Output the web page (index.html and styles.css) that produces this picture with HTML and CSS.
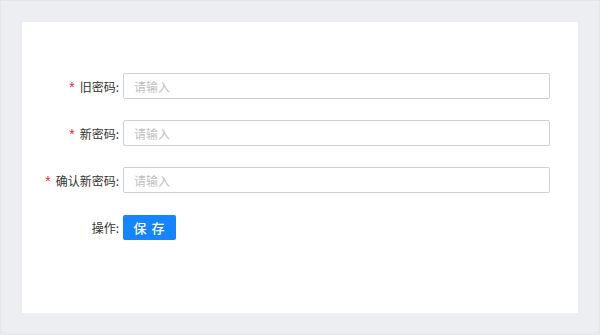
FILE: index.html
```html
<!doctype html>
<html>
  <head>
    <meta charset="utf-8" />
    <meta name="viewport" content="width=device-width, initial-scale=1" />
    <link rel="stylesheet" href="styles.css">
  </head>

  <body>
    <div class="frame">
      <section class="card">
        <form class="pwd-form">
          <div class="form-row">
            <label class="form-label required" for="old">旧密码:</label>
            <input class="form-input" type="password" id="old" placeholder="请输入" />
          </div>
          <div class="form-row">
            <label class="form-label required" for="new">新密码:</label>
            <input class="form-input" type="password" id="new" placeholder="请输入" />
          </div>
          <div class="form-row">
            <label class="form-label required" for="confirm">确认新密码:</label>
            <input class="form-input" type="password" id="confirm" placeholder="请输入" />
          </div>
          <div class="form-row">
            <span class="form-label">操作:</span>
            <button type="button" class="primary-button">保 存</button>
          </div>
        </form>
      </section>
    </div>
  </body>
</html>
```

FILE: styles.css
```css
html,
body {
  height: 100%;
}

body {
  background: #fff;
  font-family: "Noto Sans CJK SC", "Liberation Sans", sans-serif;
  font-size: 12px;
  margin: 0;
}

.frame {
  background: #eceef2;
  border: 1px solid #e3e5e9;
  box-sizing: border-box;
  height: 335px;
  padding: 21px;
  width: 600px;
}

.card {
  background: #fff;
  box-sizing: border-box;
  height: 291px;
  padding: 51px 28px 0 0;
}

.form-row {
  align-items: center;
  display: flex;
  height: 26px;
  margin-bottom: 21px;
}

.form-label {
  color: #333;
  flex: 0 0 97px;
  padding-right: 4px;
  text-align: right;
}

.form-label.required::before {
  color: #f5222d;
  content: "*";
  font-family: "Liberation Sans", sans-serif;
  font-size: 14px;
  margin-right: 5px;
}

.form-input {
  border: 1px solid #d0d0d0;
  border-radius: 2px;
  box-sizing: border-box;
  flex: 1;
  font-family: inherit;
  font-size: 12px;
  height: 26px;
  outline: none;
  padding: 0 10px;
}

.form-input::placeholder {
  color: #bfbfbf;
}

.primary-button {
  background: #1684fc;
  border: none;
  border-radius: 2px;
  color: #fff;
  cursor: pointer;
  font-family: inherit;
  font-size: 13px;
  font-weight: 500;
  height: 25px;
  letter-spacing: 1px;
  padding: 0;
  width: 53px;
}

.primary-button:hover {
  background: #40a9ff;
}
```
